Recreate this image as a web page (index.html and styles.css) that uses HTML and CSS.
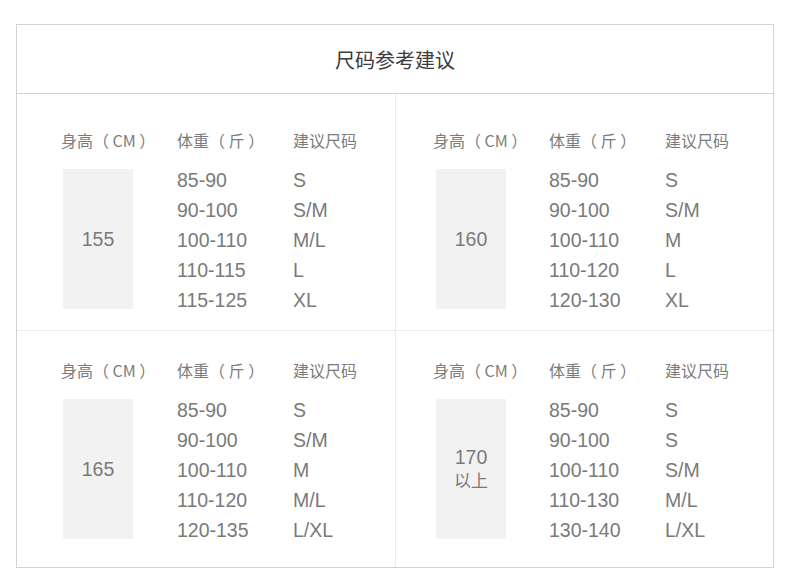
FILE: index.html
```html
<!DOCTYPE html>
<html lang="zh-CN">
<head>
<meta charset="utf-8">
<title>尺码参考建议</title>
<link rel="stylesheet" href="styles.css">
</head>
<body>
<div class="chart">
  <div class="chart-title">尺码参考建议</div>
  <div class="grid">
    <div class="cell cell-top cell-left">
      <div class="col col-h">
        <div class="label">身高（ CM ）</div>
        <div class="hbox">155</div>
      </div>
      <div class="col col-w">
        <div class="label">体重（ 斤 ）</div>
        <ul class="list"><li>85-90</li><li>90-100</li><li>100-110</li><li>110-115</li><li>115-125</li></ul>
      </div>
      <div class="col col-s">
        <div class="label">建议尺码</div>
        <ul class="list"><li>S</li><li>S/M</li><li>M/L</li><li>L</li><li>XL</li></ul>
      </div>
    </div>
    <div class="cell cell-top cell-right">
      <div class="col col-h">
        <div class="label">身高（ CM ）</div>
        <div class="hbox">160</div>
      </div>
      <div class="col col-w">
        <div class="label">体重（ 斤 ）</div>
        <ul class="list"><li>85-90</li><li>90-100</li><li>100-110</li><li>110-120</li><li>120-130</li></ul>
      </div>
      <div class="col col-s">
        <div class="label">建议尺码</div>
        <ul class="list"><li>S</li><li>S/M</li><li>M</li><li>L</li><li>XL</li></ul>
      </div>
    </div>
    <div class="cell cell-bottom cell-left">
      <div class="col col-h">
        <div class="label">身高（ CM ）</div>
        <div class="hbox">165</div>
      </div>
      <div class="col col-w">
        <div class="label">体重（ 斤 ）</div>
        <ul class="list"><li>85-90</li><li>90-100</li><li>100-110</li><li>110-120</li><li>120-135</li></ul>
      </div>
      <div class="col col-s">
        <div class="label">建议尺码</div>
        <ul class="list"><li>S</li><li>S/M</li><li>M</li><li>M/L</li><li>L/XL</li></ul>
      </div>
    </div>
    <div class="cell cell-bottom cell-right">
      <div class="col col-h">
        <div class="label">身高（ CM ）</div>
        <div class="hbox hbox-two"><span>170</span><span class="hbox-sub">以上</span></div>
      </div>
      <div class="col col-w">
        <div class="label">体重（ 斤 ）</div>
        <ul class="list"><li>85-90</li><li>90-100</li><li>100-110</li><li>110-130</li><li>130-140</li></ul>
      </div>
      <div class="col col-s">
        <div class="label">建议尺码</div>
        <ul class="list"><li>S</li><li>S</li><li>S/M</li><li>M/L</li><li>L/XL</li></ul>
      </div>
    </div>
  </div>
</div>
</body>
</html>
```

FILE: styles.css
```css
* { box-sizing: border-box; }

body {
  margin: 0;
  background: #fff;
  font-family: "Liberation Sans", "Noto Sans CJK SC", sans-serif;
  color: #7a7a7a;
}

.chart {
  margin: 24px 0 0 16px;
  width: 758px;
  height: 544px;
  border: 1px solid #d2d2d2;
  display: flex;
  flex-direction: column;
}

.chart-title {
  height: 69px;
  border-bottom: 1px solid #d2d2d2;
  display: flex;
  align-items: center;
  justify-content: center;
  font-family: "Noto Sans CJK SC", sans-serif;
  font-size: 20px;
  color: #3c3c3c;
  padding-top: 1px;
}

.grid {
  flex: 1;
  display: grid;
  grid-template-columns: 379px 377px;
  grid-template-rows: 237px 236px;
}

.cell {
  display: flex;
  align-items: flex-start;
}

.cell-left { border-right: 1px solid #ececec; padding-left: 44px; }
.cell-right { padding-left: 37px; }
.cell-top { border-bottom: 1px solid #ececec; padding-top: 32px; }
.cell-bottom { padding-top: 25px; }

.col { display: flex; flex-direction: column; }
.col-h { width: 116px; }
.col-w { width: 116px; }

.label {
  height: 30px;
  line-height: 28px;
  font-family: "Noto Sans CJK SC", sans-serif;
  font-size: 16px;
  color: #7c7c7c;
  margin-bottom: 9px;
  white-space: pre;
}

.list {
  list-style: none;
  margin: 0;
  padding: 0;
}

.list li {
  height: 30px;
  line-height: 30px;
  font-size: 19.5px;
  color: #7a7a7a;
}

.hbox {
  margin: 4px 0 0 2px;
  width: 70px;
  height: 140px;
  background: #f2f2f2;
  display: flex;
  flex-direction: column;
  align-items: center;
  justify-content: center;
  font-size: 19.5px;
  color: #7a7a7a;
}

.hbox-two { padding-bottom: 2px; }

.cell-right .hbox { margin-left: 3px; }

.hbox-sub {
  font-family: "Noto Sans CJK SC", sans-serif;
  font-size: 17px;
  line-height: 22px;
}
```
